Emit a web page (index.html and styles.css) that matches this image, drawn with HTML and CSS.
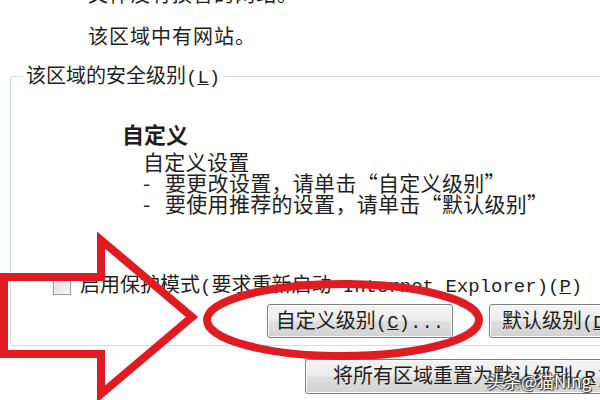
FILE: index.html
```html
<!DOCTYPE html>
<html>
  <head>
    <title>安全 - Internet 选项</title>
    <link rel="stylesheet" href="styles.css">
  </head>
  <body>
    <div class="zone-info">
      <p class="zone-line cut">文件没有损害的网站。</p>
      <p class="zone-line">该区域中有网站。</p>
    </div>

    <fieldset class="level-box">
      <legend>该区域的安全级别<span class="en">(<u>L</u>)</span></legend>

      <div class="level">
        <h3 class="level-name">自定义</h3>
        <div class="level-text">
          <p>自定义设置</p>
          <p><span class="dash">-</span>要更改设置，请单击“自定义级别”</p>
          <p><span class="dash">-</span>要使用推荐的设置，请单击“默认级别”</p>
        </div>
      </div>

      <label class="protect">
        <span class="check"></span>
        <span class="protect-text">启用保护模式<span class="en">(</span>要求重新启动<span class="en"> Internet Explorer)(<u>P</u>)</span></span>
      </label>

      <div class="level-buttons">
        <button type="button" class="btn btn-custom">自定义级别<span class="en">(<u>C</u>)...</span></button>
        <button type="button" class="btn btn-default">默认级别<span class="en">(<u>D</u>)</span></button>
      </div>
    </fieldset>

    <div class="reset-row">
      <button type="button" class="btn btn-reset">将所有区域重置为默认级别<span class="en">(<u>R</u>)</span></button>
    </div>

    <!-- red hand-drawn marks on top of the dialog -->
    <svg class="marks" width="600" height="400" viewBox="0 0 600 400">
      <polygon points="4,277 101,277 101,240 192,317 101,394 101,354 4,354" />
      <ellipse cx="343" cy="320" rx="136" ry="36" />
    </svg>

    <div class="watermark">头条@猫Ning</div>
  </body>
</html>
```

FILE: styles.css
```css
html,
body {
  margin: 0;
}

body {
  position: relative;
  width: 600px;
  height: 400px;
  overflow: hidden;
  background-color: #fff;
  color: #1e1e1e;
  font-family: "Noto Sans CJK SC", "Noto Sans", sans-serif;
  font-size: 20px;
}

p {
  margin: 0;
}

.en {
  font-family: "Liberation Mono", monospace;
  font-size: 19px;
}

/* zone description */
.zone-info {
  padding-left: 88px;
  margin-bottom: 17px;
  letter-spacing: 1px;
}

.zone-line {
  line-height: 22px;
}

.zone-line.cut {
  margin-top: -17px;
  margin-bottom: 20px;
}

/* security level group */
.level-box {
  width: 640px;
  margin: 0 0 0 10px;
  padding: 0 0 7px;
  border: 1px solid #d5dce2;
  border-radius: 3px;
}

.level-box legend {
  margin-left: 12px;
  padding: 0 3px;
  line-height: 22px;
}

.level {
  padding: 32px 0 0 111px;
}

.level-name {
  margin: 0;
  font-size: 22px;
  line-height: 24px;
  font-weight: bold;
}

.level-text {
  margin-top: 6px;
  padding-left: 21px;
  font-size: 21px;
  line-height: 21px;
  letter-spacing: 0.3px;
}

.dash {
  display: inline-block;
  width: 22px;
}

.protect {
  display: flex;
  align-items: center;
  margin-top: 59px;
  padding-left: 42px;
  line-height: 22px;
}

.protect-text {
  white-space: nowrap;
}

.check {
  flex: none;
  width: 16px;
  height: 16px;
  margin-right: 9px;
  border: 1px solid #9a9a9a;
  background: linear-gradient(135deg, #dcdcdc, #f7f7f7);
  box-shadow: inset 0 0 0 1px #f4f4f4;
}

.level-buttons {
  display: flex;
  gap: 36px;
  margin-top: 6px;
  padding-left: 256px;
}

/* push buttons */
.btn {
  flex: none;
  height: 34px;
  padding: 0;
  border: 1px solid #7f7f7f;
  border-radius: 3px;
  background: linear-gradient(#f4f4f4 0%, #ececec 48%, #dedede 52%, #d2d2d2 100%);
  box-shadow: inset 0 0 0 1px #fbfbfb;
  color: #1e1e1e;
  font-family: inherit;
  font-size: 20px;
  line-height: 30px;
  white-space: nowrap;
}

.btn-custom {
  width: 186px;
}

.btn-default {
  width: 140px;
}

.reset-row {
  margin-top: 13px;
  padding-left: 305px;
}

.btn-reset {
  width: 330px;
  height: 35px;
}

/* overlays */
.marks {
  position: absolute;
  top: 0;
  left: 0;
  pointer-events: none;
}

.marks polygon,
.marks ellipse {
  fill: none;
  stroke: #e11b22;
  stroke-width: 8;
}

.watermark {
  position: absolute;
  left: 487px;
  top: 370px;
  color: #fff;
  font-size: 17px;
  line-height: 22px;
  white-space: nowrap;
  text-shadow: 0 0 2px #333, 1px 1px 1px #333, -1px -1px 1px #333;
}
```
